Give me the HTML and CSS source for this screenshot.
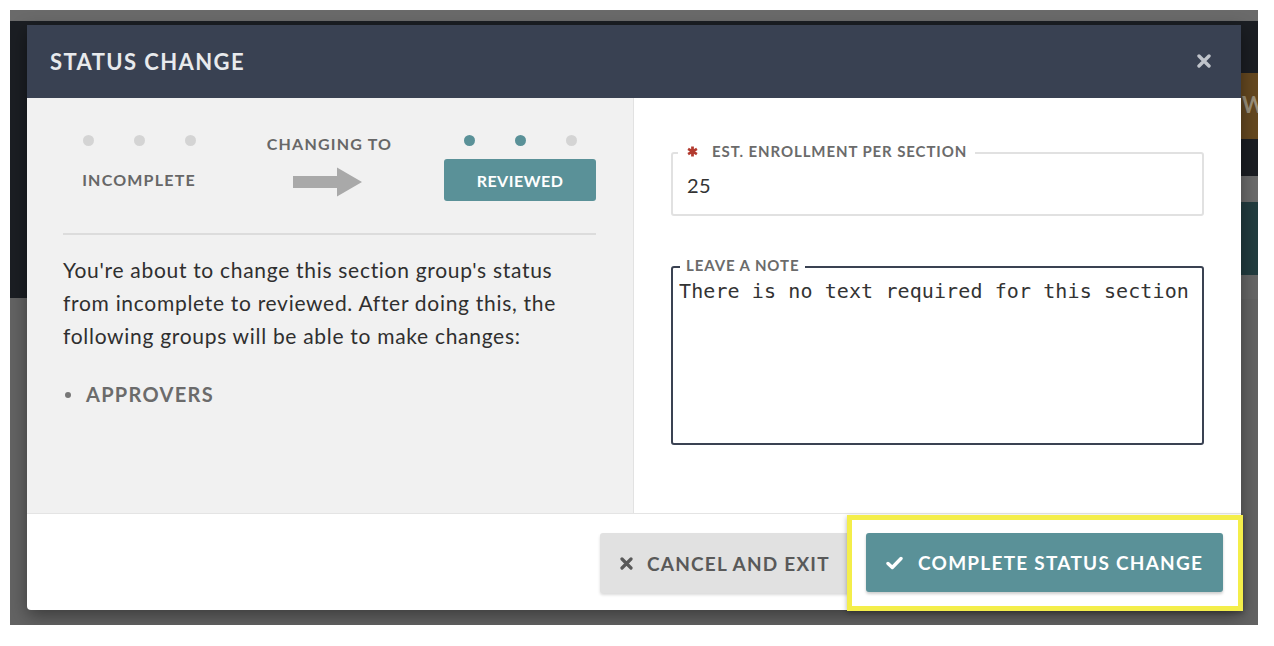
FILE: index.html
```html
<!DOCTYPE html>
<html lang="en">
<head>
<meta charset="utf-8">
<title>Status Change</title>
<link rel="stylesheet" href="styles.css">
</head>
<body>
<div class="screen">
  <div class="backdrop">
    <div class="bd-top"></div>
    <div class="bd-main">
      <div class="bd-side"></div>
      <div class="bd-content">
        <div class="bd-row bd-dark h52"></div>
        <div class="bd-row bd-brown h66"><span class="bd-letter">W</span></div>
        <div class="bd-row bd-dark h37"></div>
        <div class="bd-row bd-gray h26"></div>
        <div class="bd-row bd-teal h73"></div>
        <div class="bd-row bd-gray2 h24"></div>
      </div>
    </div>
  </div>

  <div class="modal">
    <div class="modal-header">
      <h1 class="modal-title">STATUS CHANGE</h1>
      <svg class="close-icon" width="14" height="14" viewBox="0 0 14 14"><path d="M2 2L12 12M12 2L2 12" stroke="currentColor" stroke-width="3.4" stroke-linecap="round"/></svg>
    </div>

    <div class="modal-body">
      <div class="left-panel">
        <div class="status-row">
          <div class="status-col">
            <div class="dots"><span class="dot"></span><span class="dot"></span><span class="dot"></span></div>
            <div class="status-label from-label">INCOMPLETE</div>
          </div>
          <div class="status-col">
            <div class="status-label changing">CHANGING TO</div>
            <svg class="arrow" width="70" height="32" viewBox="0 0 70 32"><path d="M0 10H44V1.5L69 16L44 30.5V22H0Z" fill="#a9a9a9"/></svg>
          </div>
          <div class="status-col">
            <div class="dots"><span class="dot on"></span><span class="dot on"></span><span class="dot"></span></div>
            <div class="to-badge">REVIEWED</div>
          </div>
        </div>
        <div class="divider"></div>
        <p class="explain">You're about to change this section group's status from incomplete to reviewed. After doing this, the following groups will be able to make changes:</p>
        <ul class="groups">
          <li>APPROVERS</li>
        </ul>
      </div>

      <div class="right-panel">
        <fieldset class="field field-enroll">
          <legend class="field-legend legend-enroll"><svg class="req" width="11" height="11" viewBox="0 0 12 12"><path d="M6 0.5V11.5M1.2 3.2L10.8 8.8M10.8 3.2L1.2 8.8" stroke="#b23a2e" stroke-width="3"/></svg>EST. ENROLLMENT PER SECTION</legend>
          <div class="field-value">25</div>
        </fieldset>
        <fieldset class="field field-note">
          <legend class="field-legend legend-note">LEAVE A NOTE</legend>
          <textarea class="note-text" rows="6">There is no text required for this section</textarea>
        </fieldset>
      </div>
    </div>

    <div class="modal-footer">
      <button class="btn btn-cancel">
        <svg width="13" height="13" viewBox="0 0 13 13"><path d="M2 2L11 11M11 2L2 11" stroke="currentColor" stroke-width="3.2" stroke-linecap="round"/></svg>
        <span>CANCEL AND EXIT</span>
      </button>
      <div class="highlight">
        <button class="btn btn-complete">
          <svg width="17" height="14" viewBox="0 0 17 14"><path d="M2 7.5L6.3 11.5L15 2.5" fill="none" stroke="currentColor" stroke-width="3.4" stroke-linecap="round" stroke-linejoin="round"/></svg>
          <span>COMPLETE STATUS CHANGE</span>
        </button>
      </div>
    </div>
  </div>
</div>
</body>
</html>
```

FILE: styles.css
```css
* { box-sizing: border-box; }

html, body {
  margin: 0;
  padding: 0;
  background: #ffffff;
}

body {
  font-family: Lato, "Open Sans", Arial, sans-serif;
  width: 1274px;
  height: 646px;
  overflow: hidden;
}

.screen {
  position: relative;
  margin: 10px 0 0 10px;
  width: 1248px;
  height: 615px;
  overflow: hidden;
  background: #636363;
}

/* page beneath the overlay */
.backdrop {
  display: flex;
  flex-direction: column;
  height: 100%;
}
.bd-top {
  height: 11px;
  background: #6a6a6a;
}
.bd-main {
  display: flex;
  flex: 1;
}
.bd-side {
  width: 17px;
  height: 277px;
  background: #1b1e23;
}
.bd-content {
  flex: 1;
  display: flex;
  flex-direction: column;
}
.bd-row { width: 100%; }
.bd-dark { background: #1b1e23; }
.bd-brown {
  background: #654820;
  display: flex;
  justify-content: flex-end;
  align-items: center;
}
.bd-gray { background: #6b6b6b; }
.bd-teal { background: #223c3f; }
.bd-gray2 { background: #666666; }
.h52 { height: 52px; }
.h66 { height: 66px; }
.h37 { height: 37px; }
.h26 { height: 26px; }
.h73 { height: 73px; }
.h24 { height: 24px; }
.bd-letter {
  font-weight: 700;
  font-size: 22px;
  color: #9c917c;
  margin-right: -7px;
  margin-top: -4px;
}

/* modal */
.modal {
  position: absolute;
  left: 17px;
  top: 15px;
  width: 1214px;
  height: 585px;
  display: flex;
  flex-direction: column;
  background: #ffffff;
  border-radius: 0 0 4px 4px;
  box-shadow: 0 6px 18px rgba(0, 0, 0, 0.4);
}

.modal-header {
  height: 73px;
  flex: none;
  background: #394152;
  display: flex;
  align-items: center;
  justify-content: space-between;
  padding: 0 30px 0 23px;
}
.modal-title {
  margin: 0;
  font-size: 22px;
  font-weight: 700;
  letter-spacing: 1.4px;
  color: #e8eaed;
}
.close-icon {
  color: #c0c4cb;
  margin-top: -1px;
}

.modal-body {
  display: flex;
  height: 415px;
  flex: none;
}

.left-panel {
  width: 607px;
  flex: none;
  background: #f1f1f1;
  border-right: 1px solid #e2e2e2;
  padding: 37px 37px 0 36px;
}

.status-row {
  display: flex;
  justify-content: space-between;
}
.status-col {
  width: 152px;
  display: flex;
  flex-direction: column;
  align-items: center;
}
.dots {
  display: flex;
  gap: 40px;
  height: 11px;
}
.dot {
  width: 11px;
  height: 11px;
  border-radius: 50%;
  background: #d4d4d4;
}
.dot.on { background: #5a9198; }

.status-label {
  font-size: 16px;
  line-height: 20px;
  font-weight: 700;
  color: #676767;
  letter-spacing: 1.2px;
}
.from-label { margin-top: 24px; }
.changing { margin-top: -1px; }
.arrow { margin-top: 12px; margin-left: -3px; }

.to-badge {
  margin-top: 13px;
  width: 152px;
  height: 42px;
  display: flex;
  align-items: center;
  justify-content: center;
  background: #5a9198;
  border-radius: 3px;
  color: #ffffff;
  font-size: 16px;
  font-weight: 700;
  letter-spacing: 0.5px;
}

.divider {
  margin-top: 32px;
  height: 2px;
  background: #dcdcdc;
}

.explain {
  margin: 18px 0 0 0;
  font-size: 21px;
  line-height: 33px;
  color: #2f2f2f;
  letter-spacing: 0.7px;
}

.groups {
  list-style: none;
  margin: 26px 0 0 0;
  padding: 0;
}
.groups li {
  display: flex;
  align-items: center;
  font-size: 20px;
  line-height: 33px;
  font-weight: 700;
  color: #6b6b6b;
  letter-spacing: 1.3px;
}
.groups li::before {
  content: "";
  width: 6px;
  height: 6px;
  border-radius: 50%;
  background: #777777;
  margin: 0 15px 0 2px;
}

.right-panel {
  flex: 1;
  background: #ffffff;
  padding: 45px 37px 0 37px;
  display: flex;
  flex-direction: column;
}

.field {
  margin: 0;
  border-radius: 3px;
  min-width: 0;
}
.field-legend {
  font-weight: 700;
  color: #6b6b6b;
  display: flex;
  align-items: center;
}

.field-enroll {
  border: 2px solid #e1e1e1;
  padding: 12px 14px 19px 14px;
}
.legend-enroll {
  margin-left: -9px;
  padding: 0 8px 4px 9px;
  font-size: 15px;
  line-height: 16px;
  letter-spacing: 0.9px;
}
.req { margin-right: 14px; }
.field-value {
  height: 20px;
  line-height: 20px;
  font-size: 20px;
  color: #333333;
  letter-spacing: 0.5px;
}

.field-note {
  margin-top: 42px;
  border: 2px solid #3a4252;
  padding: 0 6px 0 6px;
}
.legend-note {
  margin-left: 1px;
  padding: 0 6px 3px 6px;
  font-size: 15px;
  line-height: 14px;
  letter-spacing: 0.9px;
}
.note-text {
  display: block;
  width: 100%;
  height: 168px;
  border: 0;
  outline: 0;
  resize: none;
  overflow: hidden;
  padding: 4px 0 0 0;
  margin: 0;
  font-family: "DejaVu Sans Mono", "Liberation Mono", monospace;
  font-size: 20px;
  line-height: 24px;
  letter-spacing: 0.1px;
  color: #333333;
  background: transparent;
}

.modal-footer {
  flex: 1;
  border-top: 1px solid #e4e4e4;
  display: flex;
  justify-content: flex-end;
  align-items: center;
  border-radius: 0 0 4px 4px;
}

.btn {
  border: 0;
  border-radius: 3px;
  font-family: inherit;
  font-weight: 700;
  display: flex;
  align-items: center;
  cursor: pointer;
}
.btn-cancel {
  width: 250px;
  height: 60px;
  margin-top: 1px;
  padding: 0 0 0 20px;
  background: #e1e1e1;
  color: #595959;
  font-size: 19px;
  letter-spacing: 1.2px;
  gap: 14px;
  box-shadow: 0 2px 3px rgba(0, 0, 0, 0.15);
}

.highlight {
  margin-left: -3px;
  margin-right: -2px;
  height: 96px;
  margin-top: 1px;
  border: 5px solid #f4ee4a;
  background: #ffffff;
  padding: 13px 15px 0 14px;
  box-shadow: 0 2px 5px rgba(0, 0, 0, 0.3);
}
.btn-complete {
  width: 357px;
  height: 59px;
  padding: 0 0 0 20px;
  background: #5a9198;
  color: #ffffff;
  font-size: 19px;
  letter-spacing: 1.25px;
  gap: 15px;
  box-shadow: 0 2px 3px rgba(0, 0, 0, 0.2);
}
```
